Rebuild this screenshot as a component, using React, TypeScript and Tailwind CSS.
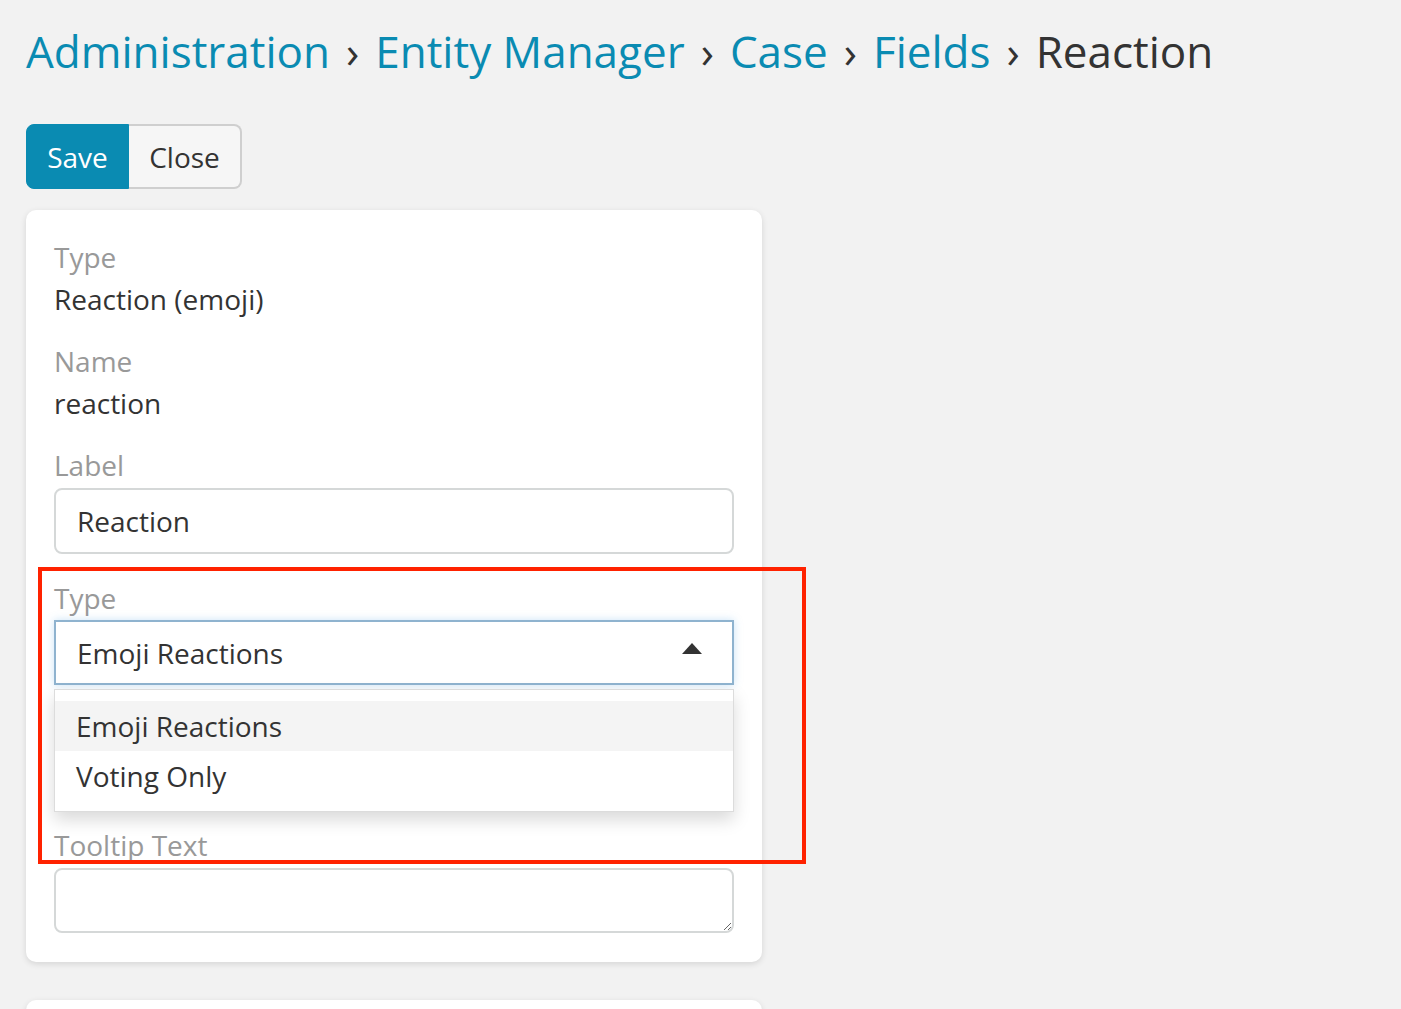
import React from "react";

export default function App() {
  const crumbs = ["Administration", "Entity Manager", "Case", "Fields"];
  return (
    <div
      className="min-h-[1009px] w-full bg-[#f2f2f2] overflow-hidden relative"
      style={{ fontFamily: '"Open Sans", "Liberation Sans", sans-serif' }}
    >
      <div className="pl-[26px] pt-[20px]">
        <h1 className="text-[44px] leading-[62px] text-[#333] font-normal whitespace-nowrap">
          {crumbs.map((c) => (
            <React.Fragment key={c}>
              <span className="text-[#0a8bb2]">{c}</span>
              <span className="text-[#333] mx-[16px]">›</span>
            </React.Fragment>
          ))}
          <span>Reaction</span>
        </h1>

        <div className="mt-[42px] flex">
          <button className="h-[65px] w-[103px] bg-[#0a8bb2] text-white text-[28px] rounded-l-[8px] border border-[#0a8bb2]">
            Save
          </button>
          <button className="h-[65px] w-[113px] bg-[#f6f6f6] text-[#333] text-[28px] rounded-r-[8px] border-2 border-l-0 border-[#cfcfcf]">
            Close
          </button>
        </div>

        <div className="mt-[21px] w-[736px] bg-white rounded-[10px] shadow-[0_2px_6px_rgba(0,0,0,0.12)] px-[28px] pt-[26px] pb-[29px]">
          <div className="text-[28px] leading-[42px] text-[#999]">Type</div>
          <div className="text-[28px] leading-[42px] text-[#333]">Reaction (emoji)</div>

          <div className="mt-[20px] text-[28px] leading-[42px] text-[#999]">Name</div>
          <div className="text-[28px] leading-[42px] text-[#333]">reaction</div>

          <div className="mt-[20px] text-[28px] leading-[42px] text-[#999]">Label</div>
          <div className="mt-[2px] h-[66px] w-full rounded-[8px] border-2 border-[#d5d8d8] flex items-center pl-[21px] text-[28px] text-[#333]">
            Reaction
          </div>

          <div className="mt-[23px] text-[28px] leading-[42px] text-[#999]">Type</div>
          <div className="relative mt-[1px]">
            <div className="h-[65px] w-full border-2 border-[#8fb3cf] shadow-[0_0_8px_rgba(102,175,233,0.35)] flex items-center justify-between pl-[21px] pr-[30px] text-[28px] text-[#333] bg-white">
              <span>Emoji Reactions</span>
              <svg width="20" height="11" viewBox="0 0 20 11" className="-mt-[8px]">
                <polygon points="10,0 20,11 0,11" fill="#333" />
              </svg>
            </div>
            <div className="absolute left-0 right-0 top-[69px] bg-white border border-[#dcdcdc] shadow-[0_8px_16px_rgba(0,0,0,0.15)] pt-[11px] pb-[10px] z-10">
              <div className="h-[50px] bg-[#f4f4f4] flex items-center pl-[21px] text-[28px] text-[#333]">
                Emoji Reactions
              </div>
              <div className="h-[50px] flex items-center pl-[21px] text-[28px] text-[#333]">
                Voting Only
              </div>
            </div>
          </div>

          <div className="mt-[139px] text-[28px] leading-[42px] text-[#999]">Tooltip Text</div>
          <textarea
            className="mt-[2px] block h-[65px] w-full rounded-[8px] border-2 border-[#d5d8d8] resize-y outline-none"
            defaultValue=""
          />
        </div>

        <div className="mt-[38px] w-[736px] h-[40px] bg-white rounded-[10px] shadow-[0_2px_6px_rgba(0,0,0,0.12)]" />
      </div>

      <div className="absolute left-[38px] top-[567px] w-[768px] h-[297px] border-[4px] border-[#ff2200] pointer-events-none z-20" />
    </div>
  );
}
